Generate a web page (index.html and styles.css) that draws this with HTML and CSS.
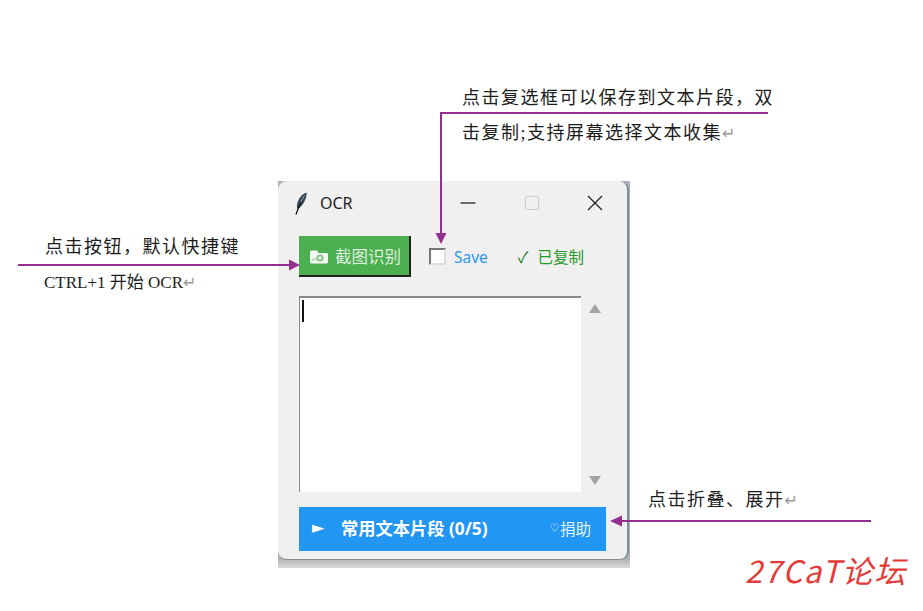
FILE: index.html
```html
<!DOCTYPE html>
<html lang="en">
<head>
    <meta charset="UTF-8">
    <meta name="viewport" content="width=device-width, initial-scale=1.0">
    <title>OCR</title>
    <link rel="stylesheet" href="styles.css">
</head>
<body>
    <div class="canvas">
        <!-- app window -->
        <div class="backdrop">
            <div class="window">
                <div class="titlebar">
                    <svg class="feather" width="16" height="24" viewBox="0 0 16 24">
                        <path d="M13.500 1.500C9 3 5.500 7.500 4.300 12.500c-.6 2.500-.5 4.500.2 5.500C8 16.500 11.500 11.500 13 6.500c.5-1.800.7-3.900.5-5z" fill="#33404f"/>
                        <path d="M11.500 4.500C9 8.500 7 12 6 14.500" fill="none" stroke="#aebfd0" stroke-width=".9"/>
                        <path d="M8 11C6.500 14.500 4.500 19 3 23.500" fill="none" stroke="#10161d" stroke-width="1.300"/>
                    </svg>
                    <span class="title">OCR</span>
                    <div class="winbtns">
                        <span class="winbtn"><svg width="16" height="16" viewBox="0 0 16 16"><path d="M.5 8h15" stroke="#222" stroke-width="1.300"/></svg></span>
                        <span class="winbtn"><svg width="16" height="16" viewBox="0 0 16 16"><rect x="1.500" y="1.500" width="13" height="13" rx="2" fill="none" stroke="#cfcfcf" stroke-width="1.200"/></svg></span>
                        <span class="winbtn"><svg width="16" height="16" viewBox="0 0 16 16"><path d="M1 1l14 14M15 1L1 15" stroke="#222" stroke-width="1.300"/></svg></span>
                    </div>
                </div>

                <div class="toolbar">
                    <div class="ocr-btn">
                        <svg width="20" height="16" viewBox="0 0 20 16">
                            <path d="M1 4c0-.8.6-1.500 1.500-1.500H8L9.500 5h8c.8 0 1.500.6 1.500 1.500V14c0 .8-.7 1.500-1.500 1.500h-15C1.600 15.500 1 14.800 1 14z" fill="#f2f8f2"/>
                            <circle cx="11" cy="10" r="3.500" fill="#7fbf82"/>
                            <circle cx="11" cy="10" r="1.800" fill="#eaf5ea"/>
                            <path d="M2.500 13.500l3-3.500 2 2" fill="none" stroke="#7fbf82"/>
                        </svg>
                        <span>截图识别</span>
                    </div>
                    <span class="checkbox"></span>
                    <span class="save">Save</span>
                    <span class="copied"><span class="tick">✓</span>已复制</span>
                </div>

                <div class="editor">
                    <div class="textbox"><span class="cursor"></span></div>
                    <div class="scroll">
                        <svg width="12" height="9" viewBox="0 0 12 9"><path d="M6 0l6 9H0z" fill="#a3a3a3"/></svg>
                        <svg width="12" height="9" viewBox="0 0 12 9"><path d="M0 0h12L6 9z" fill="#a3a3a3"/></svg>
                    </div>
                </div>

                <div class="snippets">
                    <span class="play">►</span>
                    <span class="snip-title">常用文本片段 (0/5)</span>
                    <span class="donate"><span class="heart">♡</span>捐助</span>
                </div>
            </div>
        </div>

        <!-- annotations -->
        <svg class="arrows" width="923" height="611" viewBox="0 0 923 611">
            <g fill="none" stroke="#93308f" stroke-width="2">
                <path d="M768 113H441V234"/>
                <path d="M18 265H290"/>
                <path d="M871 521H621"/>
            </g>
            <g fill="#93308f">
                <path d="M441 244l-5.500-11h11z"/>
                <path d="M300 265l-11-5.500v11z"/>
                <path d="M610 521l12-5.500v11z"/>
            </g>
        </svg>
        <p class="note note-top">点击复选框可以保存到文本片段，双<br>击复制;支持屏幕选择文本收集<span class="ret">↵</span></p>
        <p class="note note-left">点击按钮，默认快捷键<br><span class="small">CTRL+1 开始 OCR</span><span class="ret">↵</span></p>
        <p class="note note-right">点击折叠、展开<span class="ret">↵</span></p>
        <div class="logo">27CaT论坛</div>
    </div>
</body>
</html>
```

FILE: styles.css
```css
body {
    margin: 0;
    background: #fff;
    font-family: "Noto Sans CJK SC", sans-serif;
}
.canvas {
    position: relative;
    width: 923px;
    height: 611px;
    overflow: hidden;
}
.backdrop {
    position: absolute;
    left: 278px;
    top: 181px;
    width: 352px;
    height: 387px;
    background: linear-gradient(#a9b2bb 0, #a9b2bb 378px, #bdbdbd 380px, #d8d8d8 100%);
}
.window {
    width: 351px;
    height: 379px;
    box-sizing: border-box;
    background: #f0f0f0;
    border-right: 2px solid #7f8d9b;
    border-bottom: 1px solid #8b8b8b;
    border-radius: 9px;
    padding: 0 21px;
    display: flex;
    flex-direction: column;
}
.titlebar {
    height: 44px;
    margin: 0 -21px;
    padding: 0 24px 0 15px;
    display: flex;
    align-items: center;
}
.feather {
    margin-right: 11px;
}
.title {
    font-family: "Noto Sans", sans-serif;
    font-size: 16px;
    color: #222;
}
.winbtns {
    margin-left: auto;
    display: flex;
    gap: 47.500px;
}
.winbtn {
    display: flex;
}
.toolbar {
    margin-top: 11px;
    display: flex;
    align-items: center;
}
.ocr-btn {
    width: 112px;
    height: 41px;
    box-sizing: border-box;
    background: #4caf50;
    color: #dff0df;
    border-right: 2px solid #222;
    border-bottom: 2px solid #222;
    display: flex;
    align-items: center;
    padding-left: 10px;
    gap: 6px;
    font-size: 16.500px;
}
.checkbox {
    width: 17px;
    height: 17px;
    box-sizing: border-box;
    margin-left: 18px;
    background: #fff;
    border: 2px solid #777;
    border-right-color: #ddd;
    border-bottom-color: #ddd;
}
.save {
    margin-left: 8px;
    font-family: "Noto Sans", sans-serif;
    font-size: 15.500px;
    color: #2f96e8;
}
.copied {
    margin-left: 30px;
    font-size: 15.500px;
    line-height: 20px;
    padding-bottom: 2px;
    color: #1f9a2a;
    white-space: nowrap;
    display: flex;
    gap: 9px;
}
.tick {
    color: #0b7d18;
}
.editor {
    margin-top: 19px;
    height: 196px;
    display: flex;
}
.textbox {
    width: 283px;
    box-sizing: border-box;
    background: #fff;
    border-top: 2px solid #8a8a8a;
    border-left: 1px solid #8a8a8a;
    padding: 2px 0 0 2px;
}
.cursor {
    display: block;
    width: 2px;
    height: 22px;
    background: #111;
}
.scroll {
    width: 25px;
    padding: 8px 0 7px 2px;
    box-sizing: border-box;
    display: flex;
    flex-direction: column;
    justify-content: space-between;
    align-items: center;
}
.snippets {
    margin-top: 15px;
    height: 44px;
    width: 307px;
    box-sizing: border-box;
    background: #2196f3;
    color: #fff;
    display: flex;
    align-items: center;
    padding: 0 15px 3px 13px;
}
.play {
    font-family: "DejaVu Sans", sans-serif;
    font-size: 16px;
    width: 29px;
}
.snip-title {
    font-family: "Noto Sans", "Noto Sans CJK SC", sans-serif;
    font-size: 17.250px;
    font-weight: 700;
    white-space: nowrap;
}
.donate {
    margin-left: auto;
    font-size: 15.500px;
    color: #e6f3fe;
    white-space: nowrap;
    display: flex;
    align-items: center;
}
.heart {
    font-size: 9px;
    margin-right: 1px;
}
.arrows {
    position: absolute;
    left: 0;
    top: 0;
}
.note {
    position: absolute;
    margin: 0;
    font-family: "Liberation Serif", "Noto Sans CJK SC", serif;
    font-size: 18px;
    letter-spacing: 1.500px;
    line-height: 35px;
    color: #1c1c1c;
    white-space: nowrap;
}
.note-top {
    left: 462px;
    top: 81px;
}
.note-left {
    left: 45px;
    top: 230px;
}
.note-right {
    left: 648px;
    top: 483px;
}
.small {
    font-size: 17px;
    letter-spacing: 0;
    margin-left: -1px;
}
.ret {
    font-family: "DejaVu Sans", sans-serif;
    font-size: 16px;
    letter-spacing: 0;
    color: #999;
}
.logo {
    position: absolute;
    left: 745px;
    top: 548px;
    font-family: "Noto Sans CJK SC", sans-serif;
    font-size: 31px;
    font-style: italic;
    line-height: 44px;
    letter-spacing: 1.500px;
    color: #e23b38;
    white-space: nowrap;
}
```
